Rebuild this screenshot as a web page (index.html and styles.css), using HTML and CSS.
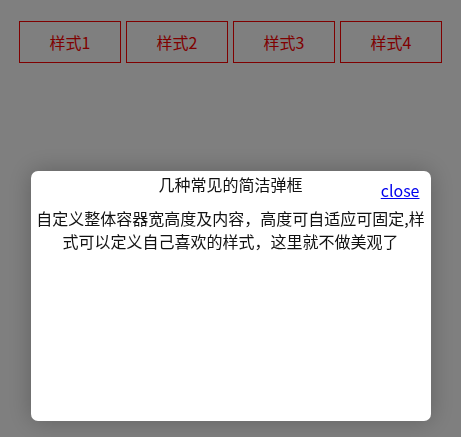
FILE: index.html
```html
<!DOCTYPE html>
<html lang="zh-CN">
<head>
    <meta charset="UTF-8">
    <meta name="viewport" content="width=device-width, initial-scale=1.0">
    <title>弹框</title>
    <link rel="stylesheet" href="styles.css">
</head>
<body>
    <div class="btn-list">
        <button class="btn">样式1</button>
        <button class="btn">样式2</button>
        <button class="btn">样式3</button>
        <button class="btn">样式4</button>
    </div>

    <!-- 遮罩层 + 弹框 -->
    <div class="mask">
        <div class="dialog">
            <a href="#" class="close">close</a>
            <p class="dialog-title">几种常见的简洁弹框</p>
            <p class="dialog-content">自定义整体容器宽高度及内容，高度可自适应可固定,样式可以定义自己喜欢的样式，这里就不做美观了</p>
        </div>
    </div>
</body>
</html>
```

FILE: styles.css
```css
body{
    margin: 0;
    background-color: #fff;
    font-family: "Noto Sans CJK SC", "Noto Sans", sans-serif;
    font-size: 16px;
}
.btn-list{
    display: flex;
    gap: 5px;
    padding: 21px 0 0 19px;
}
.btn{
    width: 102px;
    height: 42px;
    border: 1px solid #f00;
    background-color: transparent;
    color: #f00;
    font-family: inherit;
    font-size: 16px;
    padding: 0;
    cursor: pointer;
}
.mask{
    position: fixed;
    top: 0;
    left: 0;
    right: 0;
    bottom: 0;
    background-color: rgba(0, 0, 0, 0.5);
    display: flex;
    flex-direction: column;
    align-items: center;
    padding-top: 171px;
}
.dialog{
    position: relative;
    width: 400px;
    height: 250px;
    background-color: #fff;
    border-radius: 7px;
    box-shadow: 0 0 24px rgba(0, 0, 0, 0.25);
    color: #111;
}
.dialog-title{
    margin: 0;
    line-height: 26px;
    text-align: center;
}
.dialog-content{
    margin: 10px 0 0 0;
    padding: 0 2px;
    line-height: 23px;
    text-align: center;
}
.close{
    position: absolute;
    top: 9px;
    right: 11px;
    color: #00e;
    line-height: 20px;
}
```
